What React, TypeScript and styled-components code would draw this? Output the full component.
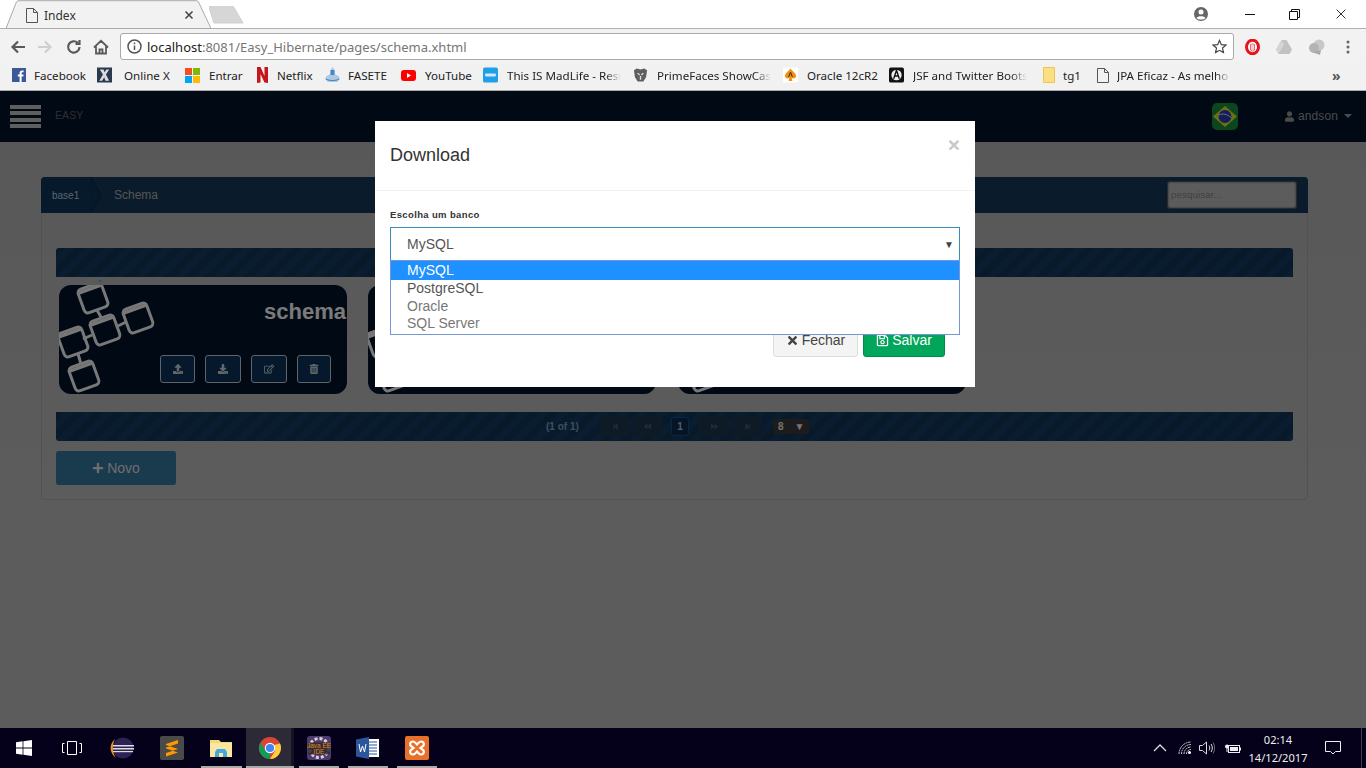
import React from "react";
import styled, { createGlobalStyle } from "styled-components";
import { FaUpload, FaDownload, FaRegEdit, FaTrashAlt, FaPlus, FaTimes, FaRegSave, FaUser, FaStepBackward, FaStepForward, FaBackward, FaForward } from "react-icons/fa";

const Global = createGlobalStyle`
  html, body { margin: 0; padding: 0; width: 1366px; height: 768px; overflow: hidden; background: #fff; }
  * { box-sizing: border-box; }
  body { font-family: "Liberation Sans", Arial, sans-serif; }
`;

const Screen = styled.div`display: flex; flex-direction: column; width: 1366px; height: 768px; overflow: hidden;`;

/* ---------- browser chrome ---------- */
const TabStrip = styled.div`display: flex; height: 29px; background: #fff; border-bottom: 1px solid #b0b0b0; position: relative; flex: none;`;
const Tab = styled.div`
  position: relative; width: 209px; height: 29px; display: flex; align-items: center; flex: none;
  padding: 0 13px 0 26px; font: 12px "Noto Sans", sans-serif; color: #333;
`;
const TabShape = styled.svg`position: absolute; left: 0; top: 0;`;
const TabContent = styled.div`position: relative; display: flex; align-items: center; width: 100%; gap: 6px; margin-top: 1px;`;
const TabTitle = styled.span`flex: 1;`;
const NewTab = styled.svg`margin: 6px 0 0 0; flex: none;`;
const WindowControls = styled.div`margin-left: auto; display: flex; align-items: center; height: 28px;`;
const Control = styled.div<{ $w: number }>`width: ${(p) => p.$w}px; display: flex; justify-content: center;`;

const Toolbar = styled.div`display: flex; align-items: center; height: 33px; background: #f2f2f2; padding: 2px 0 0 10px; flex: none;`;
const NavIcon = styled.div<{ $w: number }>`width: ${(p) => p.$w}px; flex: none; display: flex; align-items: center;`;
const Omnibox = styled.div`
  width: 1114px; height: 27px; background: #fff; border: 1px solid #a9a9a9; border-radius: 3px; flex: none;
  display: flex; align-items: center; padding: 0 6px; gap: 5px; margin-right: 11px;
`;
const Url = styled.div`flex: 1; font: 13px "Noto Sans", sans-serif; color: #767676; white-space: nowrap;`;
const Host = styled.span`color: #222;`;
const ExtIcon = styled.div<{ $w: number }>`width: ${(p) => p.$w}px; flex: none; display: flex; justify-content: flex-start;`;

const Bookmarks = styled.div`
  display: flex; align-items: center; height: 29px; background: #f1f1f1; border-bottom: 1px solid #ababab;
  padding: 0 0 2px 10px; position: relative; flex: none; font: 11.6px "Noto Sans", sans-serif; color: #222;
`;
const Bookmark = styled.div<{ $w: number; $gap?: number }>`
  width: ${(p) => p.$w}px; flex: none; display: flex; align-items: center; gap: ${(p) => p.$gap ?? 9}px; white-space: nowrap; padding-left: 1px;
`;
const BmIcon = styled.span`width: 15px; height: 16px; display: flex; flex: none; align-items: center; justify-content: center;`;
const BmLabel = styled.span<{ $fade?: boolean }>`
  ${(p) => p.$fade && `width: 114px; -webkit-mask-image: linear-gradient(90deg, #000 86%, transparent 100%); mask-image: linear-gradient(90deg, #000 86%, transparent 100%);`}
`;
const More = styled.span`position: absolute; left: 1332px; top: 4px; font-size: 14px; color: #555; font-weight: 700;`;

/* ---------- application (colours sit under a 50% black backdrop) ---------- */
const App_ = styled.div`position: relative; flex: none; height: 637px; background: linear-gradient(#b0b0b0, #b8b8b8 60%); overflow: hidden;`;
const Navbar = styled.div`display: flex; align-items: center; height: 51px; background: #001228; padding: 0 14px 0 10px;`;
const Burger = styled.div`display: flex; flex-direction: column; gap: 2.4px; width: 31px; flex: none;`;
const BurgerBar = styled.div`height: 4px; background: #bebebe;`;
const Brand = styled.div`margin: -3px 0 0 14px; font-size: 10.5px; color: #5e5e5e; letter-spacing: .1px;`;
const Flag = styled.svg`margin-left: auto; flex: none;`;
const UserMenu = styled.div`display: flex; align-items: center; gap: 4px; margin: -1px 0 0 47px; font-size: 12px; color: #969696; width: 67px; letter-spacing: .1px;`;
const Caret = styled.span`width: 0; height: 0; border: 4px solid transparent; border-top-color: #969696; border-bottom: 0; margin-left: 2px;`;

const Panel = styled.div`margin: 35px 58px 0 41px; height: 323px; border: 1px solid #a4a4a4; border-radius: 4px;`;
const PanelHead = styled.div`
  margin: -1px -1px 0; height: 36px; border-radius: 4px 4px 0 0; background: #143858; display: flex; align-items: center; position: relative; overflow: hidden;
`;
const Crumb = styled.div`
  position: relative; width: 50px; height: 36px; flex: none; background: #0e3558; color: #b4c8dc; font-size: 10px; display: flex; align-items: center; padding-left: 11px;
  padding-top: 1px; border-radius: 4px 0 0 0;
`;
const CrumbTip = styled.svg`flex: none;`;
const CrumbTitle = styled.div`margin-left: 13px; font-size: 12px; color: #aaa; margin-top: -1px;`;
const Search = styled.div`
  margin-left: auto; margin-right: 11px; width: 130px; height: 28px; background: #b8b8b8; border: 1px solid #555; border-radius: 3px;
  box-shadow: inset 0 0 2px #444; font-size: 9.5px; color: #808080; display: flex; align-items: center; padding: 0 0 1px 3px; letter-spacing: .2px;
`;
const PanelBody = styled.div`display: flex; flex-direction: column; padding: 35px 14px 0;`;
const Striped = styled.div<{ $round?: boolean }>`
  height: 29px; display: flex; align-items: center; border-radius: ${(p) => (p.$round ? "0 0 3px 3px" : "3px 3px 0 0")};
  background: repeating-linear-gradient(-45deg, #123860 0 7px, #103454 7px 14px);
`;
const Pager = styled.div`display: flex; align-items: center; margin-left: 490px; height: 100%; font-size: 10px; font-weight: 700; color: #78a0be;`;
const PagerText = styled.span`width: 54px; flex: none;`;
const PageBtn = styled.span<{ $w: number; $mr?: number }>`
  width: ${(p) => p.$w}px; margin-right: ${(p) => p.$mr ?? 2}px; height: 21px; flex: none; display: flex; align-items: center; justify-content: center;
  color: #385a78; font-size: 7px; background: #1c344c; border-radius: 4px;
`;
const PageNow = styled.span`
  width: 18px; height: 19px; margin: 0 10px 0 7px; display: flex; align-items: center; justify-content: center; flex: none;
  background: #0a2a4c; border: 1px solid #0f4f88; border-radius: 3px; color: #a0c0d8; font-size: 10px;
`;
const PageSize = styled.span`
  width: 36px; height: 15px; margin-left: 9px; background: #383838; border-radius: 2px; display: flex; align-items: center; gap: 11px; padding-left: 5px; color: #e6e6e6; font-size: 10px;
`;
const Cards = styled.div`
  position: relative; display: grid; grid-template-columns: repeat(3, 288px); column-gap: 21.4px; padding: 8px 0 18px 3px;
  &::before { content: ""; position: absolute; left: 43px; top: 3px; width: 2px; height: 2px; background: #5494ff; }
`;
const Card = styled.div`position: relative; height: 109px; background: #001228; border-radius: 12px; overflow: hidden; display: flex; flex-direction: column; align-items: flex-end;`;
const CardArt = styled.svg`position: absolute; left: 0; top: 0;`;
const CardTitle = styled.div`position: relative; margin: 14px 1px 0 0; font-size: 22px; line-height: 25px; font-weight: 700; color: #f4f4f4;`;
const CardActions = styled.div`position: relative; display: flex; gap: 10px; margin: 31px 16px 0 0;`;
const CardBtn = styled.div<{ $w: number }>`
  width: ${(p) => p.$w}px; height: 28px; border: 1px solid #bec8d2; border-radius: 3px; background: #0c3058;
  display: flex; align-items: center; justify-content: center; color: #c0d0dc; font-size: 10px;
`;
const NewBtn = styled.div`
  width: 120px; height: 34px; margin-top: 10px; background: #34749c; border-radius: 3px; color: #dcdcdc; font-size: 14px;
  display: flex; align-items: center; justify-content: center; gap: 3px;
`;

const Backdrop = styled.div`position: absolute; inset: 0; background: rgba(0,0,0,.5);`;
const Modal = styled.div`position: absolute; left: 375px; top: 30px; width: 600px; height: 266px; background: #fff; display: flex; flex-direction: column; color: #333;`;
const ModalHead = styled.div`position: relative; height: 70px; flex: none; border-bottom: 1px solid #f2f2f2; padding: 23px 15px 0;`;
const ModalTitle = styled.div`font-size: 18px; line-height: 22px; letter-spacing: -.02px;`;
const Close = styled.div`position: absolute; right: 15px; top: 12px; font-size: 21px; line-height: 24px; font-weight: 700; color: #c8c8c8;`;
const ModalBody = styled.div`position: relative; padding: 18px 15px 0; flex: none;`;
const Label = styled.div`font-size: 9.5px; line-height: 12px; font-weight: 700; letter-spacing: .36px; margin-bottom: 6px; color: #333;`;
const SelectBox = styled.div`
  height: 34px; border: 1px solid #3c8dbc; display: flex; align-items: center; justify-content: space-between; padding: 0 5px 0 16px; font-size: 14px; color: #555;
`;
const SelectArrow = styled.span`font-size: 10px; color: #444;`;
const Dropdown = styled.div`
  position: absolute; left: 15px; right: 15px; top: 69px; height: 75px; background: #fff; border: 1px solid #7596d4; font-size: 14px; z-index: 2;
`;
const Option = styled.div<{ $state: "on" | "mid" | "off" }>`
  height: ${(p) => (p.$state === "on" ? 19 : 17.5)}px; line-height: ${(p) => (p.$state === "on" ? 19 : 17.5)}px; padding-left: 16px;
  background: ${(p) => (p.$state === "on" ? "#1e90ff" : "transparent")};
  color: ${(p) => (p.$state === "on" ? "#fff" : p.$state === "mid" ? "#555" : "#777")};
`;
const ModalFoot = styled.div`display: flex; justify-content: flex-end; gap: 5px; padding: 62px 30px 0 0;`;
const FootBtn = styled.div<{ $primary?: boolean; $w: number }>`
  width: ${(p) => p.$w}px; height: 34px; border-radius: 3px; display: flex; align-items: center; justify-content: center; gap: 3px; font-size: 14px;
  background: ${(p) => (p.$primary ? "#00a65a" : "#f4f4f4")};
  border: 1px solid ${(p) => (p.$primary ? "#008d4c" : "#ddd")};
  color: ${(p) => (p.$primary ? "#fff" : "#444")};
`;

/* ---------- taskbar ---------- */
const Taskbar = styled.div`position: relative; flex: none; height: 40px; background: #05011a; display: flex; align-items: center; color: #fff;`;
const TaskCell = styled.div<{ $w: number; $active?: boolean; $open?: boolean }>`
  position: relative; width: ${(p) => p.$w}px; height: 40px; flex: none; display: flex; align-items: center; justify-content: center;
  background: ${(p) => (p.$active ? "linear-gradient(90deg, #2d2a38 45px, #16131f 45px)" : "transparent")};
  ${(p) => p.$open && `&::after { content: ""; position: absolute; bottom: 0; left: ${p.$active ? 0 : 5}px; right: ${p.$active ? 0 : 4}px; height: 2px; background: #aaa; }`}
`;
const Tray = styled.div`margin-left: auto; display: flex; align-items: center; height: 40px; padding-right: 4px;`;
const TrayIcon = styled.div<{ $w: number; $mr?: number }>`width: ${(p) => p.$w}px; margin-right: ${(p) => p.$mr ?? 0}px; flex: none; display: flex; justify-content: center;`;
const Clock = styled.div`width: 72px; text-align: center; font: 11.1px/18px "Noto Sans", sans-serif; color: #eee; flex: none; padding-top: 1px;`;
const DesktopEdge = styled.div`width: 1px; height: 40px; background: #3c3c4a; margin-left: 9px;`;

/* ---------- drawings ---------- */
const PageGlyph = ({ c = "#555" }: { c?: string }) => (
  <svg width="12" height="15" viewBox="0 0 12 15" fill="none" stroke={c} strokeWidth="1"><path d="M.5.5h7l4 4v10H.5zM7.5.5v4h4" /></svg>
);
const Art = () => (
  <CardArt width="120" height="109" viewBox="0 0 120 109" fill="none" stroke="#f0f0f0" strokeWidth="3">
    <path d="M38 25l5 9M57 42l10-5M33 50l-9 4M19 69l3 10" />
    {[[34, 13], [46, 45], [79, 33], [14, 57], [25, 91]].map(([x, y], i) => (
      <g key={i} transform={`translate(${x} ${y}) rotate(-20)`}>
        <rect x="-12.500" y="-12.500" width="25" height="25" rx="4" />
        <path d="M-12.500 -9.500h25" strokeWidth="3.500" />
      </g>
    ))}
  </CardArt>
);
const WinLogo = () => (
  <svg width="16" height="16" viewBox="0 0 16 16" fill="#fff"><path d="M0 2.2l6.6-.9v6.3H0zM7.4 1.2L16 0v7.6H7.4zM0 8.4h6.6v6.3L0 13.8zM7.4 8.4H16V16l-8.6-1.2z" /></svg>
);
const ChromeLogo = ({ s = 22 }: { s?: number }) => (
  <svg width={s} height={s} viewBox="0 0 22 22">
    <circle cx="11" cy="11" r="11" fill="#db4437" />
    <path d="M11 22A11 11 0 0 1 1.5 5.5L6.5 14l5 0-.5 8z" fill="#0f9d58" />
    <path d="M21 6.5A11 11 0 0 1 11 22l5-8-1-6z" fill="#ffcd40" />
    <circle cx="11" cy="11" r="5.2" fill="#fff" /><circle cx="11" cy="11" r="4.1" fill="#4285f4" />
  </svg>
);

const bookmarks: { w: number; label: string; fade?: boolean; icon: React.ReactNode; gap?: number }[] = [
  { w: 86, gap: 8, label: "Facebook", icon: <svg width="14" height="14" viewBox="0 0 14 14"><rect width="14" height="14" fill="#3b5998" /><path d="M9.6 14V8.6h1.7l.3-2H9.6V5.3c0-.6.2-1 1-1h1V2.5c-.3 0-.9-.1-1.5-.1-1.5 0-2.5.9-2.5 2.6v1.6H5.8v2h1.8V14z" fill="#fff" /></svg> },
  { w: 88, gap: 12, label: "Online X", icon: <svg width="16" height="16" viewBox="0 0 16 16"><rect width="16" height="16" fill="#2a3a4c" /><path d="M3 2h4l1 3 2-3h3L9.500 7.500 13 14H9L7.700 10.500 5.500 14h-3l3.800-6.500z" fill="#d8dce0" /></svg> },
  { w: 70, label: "Entrar", icon: <svg width="15" height="15" viewBox="0 0 15 15"><rect width="7" height="7" fill="#f25022" /><rect x="8" width="7" height="7" fill="#7fba00" /><rect y="8" width="7" height="7" fill="#00a4ef" /><rect x="8" y="8" width="7" height="7" fill="#ffb900" /></svg> },
  { w: 70, gap: 7, label: "Netflix", icon: <svg width="11" height="16" viewBox="0 0 11 16"><path d="M0 0h3.500l4 9V0H11v16l-3.500-.5L3.500 7v8.500L0 16z" fill="#c4161c" /></svg> },
  { w: 76, gap: 8, label: "FASETE", icon: <svg width="15" height="16" viewBox="0 0 15 16"><path d="M7.500 0l2 3v4l4 2 1.500 3-3 3H3l-3-3 1.500-3 4-2V3z" fill="#a9cbe6" /><rect x="5.500" y="3" width="4" height="5" fill="#4a86c0" /><path d="M1 12c3 2 10 2 13 0" stroke="#3b7ab5" fill="none" /></svg> },
  { w: 82, label: "YouTube", icon: <svg width="15" height="11" viewBox="0 0 15 11"><rect width="15" height="11" rx="3" fill="#f00" /><path d="M6 3l4 2.500L6 8z" fill="#fff" /></svg> },
  { w: 150, label: "This IS MadLife - Resu", fade: true, icon: <svg width="16" height="16" viewBox="0 0 16 16"><rect width="16" height="16" rx="2" fill="#1e9fe8" /><rect x="2" y="6.500" width="12" height="3" rx="1.500" fill="#cfeaff" /></svg> },
  { w: 150, label: "PrimeFaces ShowCase", fade: true, icon: <svg width="16" height="16" viewBox="0 0 16 16"><path d="M1 3l3-2 4 1 4-1 3 2-1 7-3 5H5l-3-5z" fill="#5e5e5e" /><path d="M5 6l2 2M11 6L9 8M8 9v4" stroke="#ddd" strokeWidth="1.500" /></svg> },
  { w: 106, label: "Oracle 12cR2", icon: <svg width="16" height="16" viewBox="0 0 16 16"><rect width="16" height="16" fill="#fff" /><path d="M8 1c2 3 6 5 6 8 0 2.500-3 3.500-4.800 2l.8 3.500H6l.8-3.500C5 12.500 2 11.500 2 9c0-3 4-5 6-8z" fill="#f29111" /><path d="M6 10l2-5 2 5" stroke="#222" fill="none" /></svg> },
  { w: 152, label: "JSF and Twitter Boots", fade: true, icon: <svg width="16" height="16" viewBox="0 0 16 16"><rect width="16" height="16" rx="2" fill="#111" /><circle cx="8" cy="8" r="5.500" fill="#eee" /><path d="M5 12l3-9 3 9M6 9h4" stroke="#111" strokeWidth="1.500" fill="none" /></svg> },
  { w: 54, gap: 7, label: "tg1", icon: <svg width="12" height="16" viewBox="0 0 12 16"><path d="M.5.5h11v15H.5z" fill="#fbdf85" stroke="#f0c44e" /></svg> },
  { w: 150, gap: 7, label: "JPA Eficaz - As melho", fade: true, icon: <PageGlyph /> },
];

const Stroke = ({ d, c = "#555", w = 2.2, s = 16 }: { d: string; c?: string; w?: number; s?: number }) => (
  <svg width={s} height={s} viewBox="0 0 16 16" fill="none" stroke={c} strokeWidth={w}><path d={d} /></svg>
);

export default function App() {
  return (
    <Screen>
      <Global />
      <TabStrip>
        <Tab>
          <TabShape width="213" height="29" viewBox="0 0 213 29">
            <path d="M6 28.500L16 3c.5-1.500 1.500-2.300 3-2.300h177c1.500 0 2.500.8 3 2.300l12 25.500z" fill="#f2f2f2" stroke="#aaa" />
          </TabShape>
          <TabContent>
            <PageGlyph />
            <TabTitle>Index</TabTitle>
            <Stroke d="M4 4l8 8M12 4l-8 8" c="#444" w={1.8} s={14} />
          </TabContent>
        </Tab>
        <NewTab width="36" height="20" viewBox="0 0 36 20"><path d="M0 1.500C0 .5.500 0 1.500 0H23c1 0 1.500.5 2 1.500L34 17H5z" fill="#d6d6d6" stroke="#cfcfcf" /></NewTab>
        <WindowControls>
          <Control $w={54}><svg width="16" height="16" viewBox="0 0 16 16"><circle cx="8" cy="8" r="7" fill="#666" /><circle cx="8" cy="6" r="2.500" fill="#fff" /><path d="M3.500 12c1-2.500 8-2.500 9 0-2 2-7 2-9 0z" fill="#fff" /></svg></Control>
          <Control $w={44}><svg width="10" height="1" viewBox="0 0 10 1"><rect width="10" height="1" fill="#111" /></svg></Control>
          <Control $w={44}><svg width="11" height="11" viewBox="0 0 11 11" fill="none" stroke="#111"><path d="M.5 2.500h8v8h-8zM2.500 2.500v-2h8v8h-2" /></svg></Control>
          <Control $w={50}><Stroke d="M3 3l10 10M13 3L3 13" c="#111" w={1} s={14} /></Control>
        </WindowControls>
      </TabStrip>
      <Toolbar>
        <NavIcon $w={27}><Stroke d="M15 8H3M8 2.500L2.500 8 8 13.500" c="#5a5a5a" /></NavIcon>
        <NavIcon $w={29}><Stroke d="M1 8h12M8 2.500L13.500 8 8 13.500" c="#cfcfcf" /></NavIcon>
        <NavIcon $w={27}><Stroke d="M13.500 8A5.700 5.700 0 1 1 11.800 3.900M13.500 1v4h-4" c="#5a5a5a" /></NavIcon>
        <NavIcon $w={27}><Stroke d="M1 8.500L8 1.800l7 6.700M3 7.500v7h10v-7M6.500 14.500v-4h3v4" c="#5a5a5a" w={1.800} /></NavIcon>
        <Omnibox>
          <svg width="15" height="15" viewBox="0 0 15 15" fill="none" stroke="#555" strokeWidth="1.500"><circle cx="7.500" cy="7.500" r="6.500" /><path d="M7.500 6.500v4.500M7.500 3.500v1.700" /></svg>
          <Url><Host>localhost</Host>:8081/Easy_Hibernate/pages/schema.xhtml</Url>
          <svg width="15" height="15" viewBox="0 0 16 16" fill="none" stroke="#444" strokeWidth="1.300"><path d="M8 1.500l2 4.500 4.800.5-3.600 3.200 1 4.800L8 12.100l-4.200 2.400 1-4.800L1.200 6.500 6 6z" /></svg>
        </Omnibox>
        <ExtIcon $w={31}><svg width="15" height="16" viewBox="0 0 15 16"><ellipse cx="7.500" cy="8" rx="6" ry="6.800" fill="#fff" stroke="#e5141f" strokeWidth="3" /><path d="M5.500 11V5.500c1-.7 3-.7 4 0V11c-1 1.300-3 1.300-4 0z" fill="#f4d0d0" stroke="#e5141f" strokeWidth=".6" /></svg></ExtIcon>
        <ExtIcon $w={32}><svg width="16" height="14" viewBox="0 0 16 14"><path d="M5.500 0h5L16 9.500 13.500 14h-11L0 9.500z" fill="#c2c2c2" /><path d="M5.500 0L8 4.500 2.500 14 0 9.500z" fill="#d5d5d5" /></svg></ExtIcon>
        <ExtIcon $w={38}><svg width="17" height="16" viewBox="0 0 17 16"><circle cx="11" cy="6" r="5.500" fill="#c8c8c8" /><circle cx="6" cy="9" r="5" fill="#b4b4b4" /><path d="M4 13l8 3 1-5z" fill="#a8a8a8" /></svg></ExtIcon>
        <ExtIcon $w={10}><svg width="4" height="14" viewBox="0 0 4 14" fill="#666"><circle cx="2" cy="2" r="1.500" /><circle cx="2" cy="7" r="1.500" /><circle cx="2" cy="12" r="1.500" /></svg></ExtIcon>
      </Toolbar>
      <Bookmarks>
        {bookmarks.map((b) => (
          <Bookmark key={b.label} $w={b.w} $gap={b.gap}>
            <BmIcon>{b.icon}</BmIcon>
            <BmLabel $fade={b.fade}>{b.label}</BmLabel>
          </Bookmark>
        ))}
        <More>»</More>
      </Bookmarks>

      <App_>
        <Navbar>
          <Burger><BurgerBar /><BurgerBar /><BurgerBar /><BurgerBar /></Burger>
          <Brand>EASY</Brand>
          <Flag width="26" height="27" viewBox="0 0 26 27">
            <rect width="26" height="27" rx="5" fill="#148c3c" />
            <path d="M13 3l12 10.500L13 24 1 13.500z" fill="#dcdc28" />
            <circle cx="13" cy="13.500" r="6.500" fill="#283cb4" />
            <path d="M6.500 12c4-2 9-1 13 3" stroke="#ddd" fill="none" />
          </Flag>
          <UserMenu><FaUser size={11} /><span>andson</span><Caret /></UserMenu>
        </Navbar>
        <Panel>
          <PanelHead>
            <Crumb>base1</Crumb>
            <CrumbTip width="10" height="36" viewBox="0 0 10 36"><path d="M0 0l10 18L0 36z" fill="#0e3558" stroke="#0a2640" /></CrumbTip>
            <CrumbTitle>Schema</CrumbTitle>
            <Search>pesquisar...</Search>
          </PanelHead>
          <PanelBody>
            <Striped />
            <Cards>
              <Card>
                <Art />
                <CardTitle>schema</CardTitle>
                <CardActions>
                  <CardBtn $w={35}><FaUpload /></CardBtn>
                  <CardBtn $w={36}><FaDownload /></CardBtn>
                  <CardBtn $w={36}><FaRegEdit /></CardBtn>
                  <CardBtn $w={34}><FaTrashAlt /></CardBtn>
                </CardActions>
              </Card>
              <Card><Art /></Card>
              <Card><Art /></Card>
            </Cards>
            <Striped $round>
              <Pager>
                <PagerText>(1 of 1)</PagerText>
                <PageBtn $w={30}><FaStepBackward /></PageBtn>
                <PageBtn $w={30}><FaBackward /></PageBtn>
                <PageNow>1</PageNow>
                <PageBtn $w={30} $mr={3}><FaForward /></PageBtn>
                <PageBtn $w={30}><FaStepForward /></PageBtn>
                <PageSize>8<span>▼</span></PageSize>
              </Pager>
            </Striped>
            <NewBtn><FaPlus size={12} /> Novo</NewBtn>
          </PanelBody>
        </Panel>
        <Backdrop />
        <Modal>
          <ModalHead>
            <ModalTitle>Download</ModalTitle>
            <Close>×</Close>
          </ModalHead>
          <ModalBody>
            <Label>Escolha um banco</Label>
            <SelectBox>MySQL<SelectArrow>▼</SelectArrow></SelectBox>
            <Dropdown>
              <Option $state="on">MySQL</Option>
              <Option $state="mid">PostgreSQL</Option>
              <Option $state="off">Oracle</Option>
              <Option $state="off">SQL Server</Option>
            </Dropdown>
          </ModalBody>
          <ModalFoot>
            <FootBtn $w={85}><FaTimes size={13} /> Fechar</FootBtn>
            <FootBtn $w={82} $primary><FaRegSave size={13} /> Salvar</FootBtn>
          </ModalFoot>
        </Modal>
      </App_>

      <Taskbar>
        <TaskCell $w={48}><WinLogo /></TaskCell>
        <TaskCell $w={48}>
          <svg width="20" height="14" viewBox="0 0 20 14" fill="none" stroke="#fff"><path d="M5.500.5h9v13h-9zM2.500 2.500h-2v9h2M17.500 2.500h2v9h-2" /></svg>
        </TaskCell>
        <TaskCell $w={51}>
          <svg width="24" height="24" viewBox="0 0 24 24"><circle cx="13" cy="12" r="10.500" fill="#2c2255" /><path d="M5 3C-1 8-1 17 6 22 2 17 2 8 5 3z" fill="#f7941e" /><rect x="3" y="9" width="21" height="1.500" fill="#ddd" /><rect x="3" y="12" width="21" height="1.500" fill="#ddd" /><rect x="3" y="15" width="20" height="1.200" fill="#ddd" /></svg>
        </TaskCell>
        <TaskCell $w={49}>
          <svg width="24" height="24" viewBox="0 0 24 24"><rect width="24" height="24" rx="2" fill="#4a4a48" /><path d="M18 4L6 8v3.500L18 7.500zM6 9l12 4v3.500L6 12.500zM18 13L6 17v3.500l12-4z" fill="#ff9800" /></svg>
        </TaskCell>
        <TaskCell $w={50} $open>
          <svg width="22" height="20" viewBox="0 0 22 20"><path d="M0 2h9l2 2h11v15H0z" fill="#f5d77c" /><rect y="5" width="22" height="14" fill="#fbe6a2" /><path d="M5 19v-5l2-3h8l2 3v5h-4v-4H9v4z" fill="#3fa9e0" /></svg>
        </TaskCell>
        <TaskCell $w={48} $active $open><ChromeLogo /></TaskCell>
        <TaskCell $w={49} $open>
          <svg width="24" height="24" viewBox="0 0 24 24"><rect width="24" height="24" rx="3" fill="#4e3a6e" /><circle cx="12" cy="12" r="9.500" fill="none" stroke="#d4d4d4" strokeWidth="3" strokeDasharray="3 2" /><rect x="1" y="6.500" width="22" height="12" fill="#2f2a2a" opacity=".85" /><text x="12" y="12" textAnchor="middle" fontSize="6.500" fontFamily="Liberation Sans" fill="#e08a20">Java EE</text><text x="12" y="18" textAnchor="middle" fontSize="6.500" fontFamily="Liberation Sans" fill="#e08a20">IDE</text></svg>
        </TaskCell>
        <TaskCell $w={49} $open>
          <svg width="23" height="22" viewBox="0 0 23 22"><rect x="9" y="2" width="14" height="18" fill="#fff" /><path d="M11 5h10M11 8h10M11 11h10M11 14h10M11 17h10" stroke="#2b579a" /><path d="M0 2.500L13 0v22L0 19.500z" fill="#2b579a" /><path d="M3 7l1.500 8L6.500 9l2 6L10 7" stroke="#fff" fill="none" /></svg>
        </TaskCell>
        <TaskCell $w={49} $open>
          <svg width="24" height="24" viewBox="0 0 24 24"><rect width="24" height="24" rx="2" fill="#e8702a" /><path d="M8 5.500c-3.500 0-3.500 4-1.500 5L8.500 12l-2 1.500c-2 1-2 5 1.500 5 2 0 3-2 4-3 1 1 2 3 4 3 3.500 0 3.500-4 1.500-5l-2-1.500 2-1.500c2-1 2-5-1.500-5-2 0-3 2-4 3-1-1-2-3-4-3z" fill="none" stroke="#fff" strokeWidth="2.200" /></svg>
        </TaskCell>
        <Tray>
          <TrayIcon $w={20} $mr={5}><Stroke d="M2 11l6-6 6 6" c="#ddd" w={1.3} /></TrayIcon>
          <TrayIcon $w={20} $mr={2.5}><svg width="14" height="14" viewBox="0 0 14 14" fill="none" stroke="#ccc"><path d="M1 13A12 12 0 0 1 13 1M3.500 13A9.500 9.500 0 0 1 13 3.500M6 13a7 7 0 0 1 7-7M8.500 13A4.500 4.500 0 0 1 13 8.500" strokeDasharray="2 .6" /><circle cx="11.500" cy="11.500" r="1.500" fill="#fff" stroke="none" /></svg></TrayIcon>
          <TrayIcon $w={20} $mr={5}><svg width="16" height="14" viewBox="0 0 16 14" fill="none" stroke="#ddd"><path d="M.5 4.500h3l4-3.500v12l-4-3.500h-3zM10 4.500c1 1.500 1 3.500 0 5M12 3c1.800 2.500 1.800 5.500 0 8" /><path d="M14 1.500c2.200 3.500 2.200 7.500 0 11" stroke="#777" /></svg></TrayIcon>
          <TrayIcon $w={20}><svg width="17" height="11" viewBox="0 0 17 11"><rect x="4.500" y="2.500" width="11" height="7" fill="none" stroke="#eee" /><rect x="6" y="4" width="8" height="4" fill="#eee" /><rect x="15.500" y="4.500" width="1.500" height="3" fill="#eee" /><circle cx="3" cy="3.500" r="2" fill="#eee" /><path d="M3 5v4" stroke="#eee" /></svg></TrayIcon>
          <Clock>02:14<br />14/12/2017</Clock>
          <TrayIcon $w={38}><svg width="16" height="14" viewBox="0 0 16 14" fill="none" stroke="#eee"><path d="M.5.500h15v10h-5l-2.500 2.500-2.500-2.500h-5z" /></svg></TrayIcon>
          <DesktopEdge />
        </Tray>
      </Taskbar>
    </Screen>
  );
}
